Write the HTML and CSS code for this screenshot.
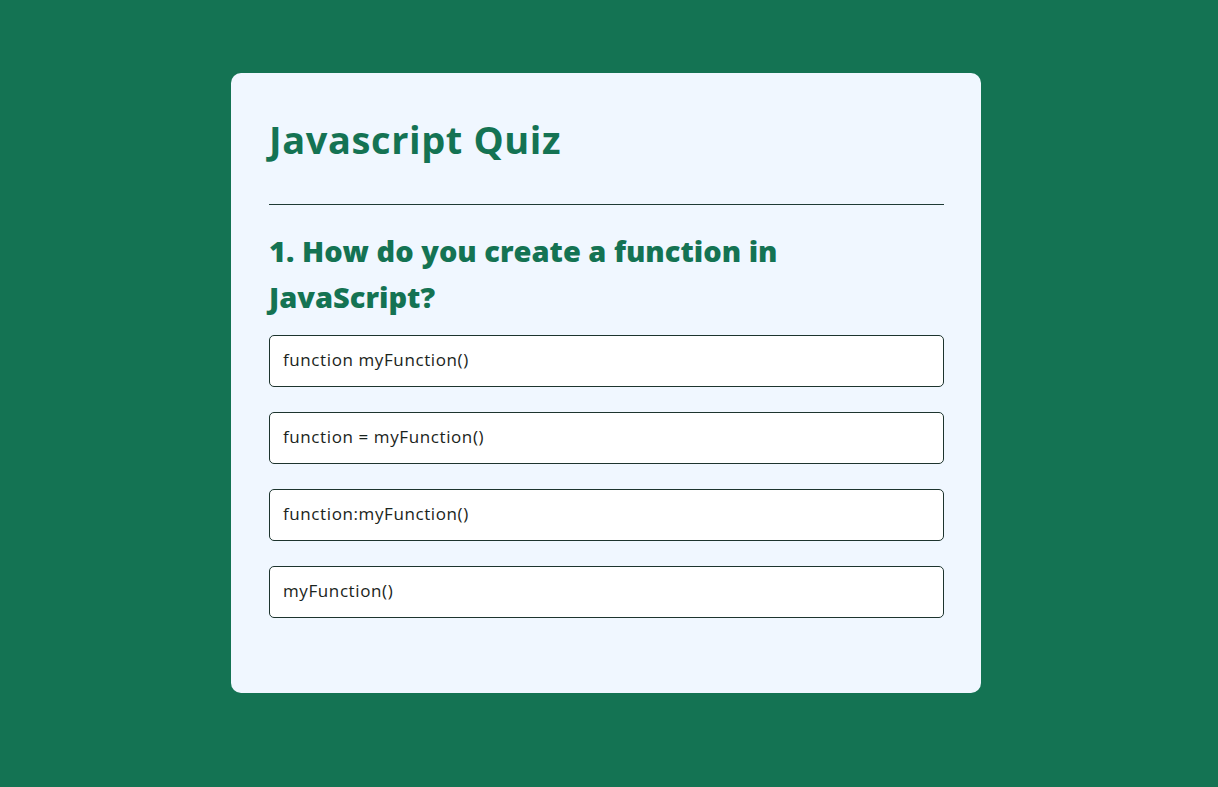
FILE: index.html
```html
<!DOCTYPE html>
<html lang="en">
<head>
<meta charset="utf-8">
<title>Javascript Quiz</title>
<link rel="stylesheet" href="styles.css">
</head>
<body>
<main class="page">
  <section class="quiz">
    <h1 class="quiz-title">Javascript Quiz</h1>
    <hr class="divider">
    <h2 class="question">1. How do you create a function in JavaScript?</h2>
    <ul class="options">
      <li class="option">function myFunction()</li>
      <li class="option">function = myFunction()</li>
      <li class="option">function:myFunction()</li>
      <li class="option">myFunction()</li>
    </ul>
  </section>
</main>
</body>
</html>
```

FILE: styles.css
```css
* { box-sizing: border-box; }
html, body { margin: 0; padding: 0; }
body {
  background: #147353;
  font-family: "Open Sans", "DejaVu Sans", sans-serif;
  min-height: 787px;
}
.page {
  display: flex;
  justify-content: center;
  padding: 73px 6px 0 0;
}
.quiz {
  width: 750px;
  height: 620px;
  background: #f0f7ff;
  border-radius: 10px;
  padding: 38px 37px 0 38px;
}
.quiz-title {
  margin: 0;
  color: #147353;
  font-size: 38px;
  font-weight: 700;
  line-height: 56px;
  padding-top: 0;
  letter-spacing: 0.6px;
}
.divider {
  border: 0;
  border-top: 1px solid #1f3b35;
  margin: 37px 0 0 0;
}
.question {
  margin: 23px 0 0 0;
  color: #147353;
  font-size: 29px;
  font-weight: 800;
  line-height: 46px;
}
.options {
  list-style: none;
  margin: 15px 0 0 0;
  padding: 0;
  display: flex;
  flex-direction: column;
  gap: 25px;
}
.option {
  height: 52px;
  display: flex;
  align-items: center;
  padding: 0 0 3px 13px;
  background: #ffffff;
  border: 1px solid #1d342e;
  border-radius: 5px;
  color: #1a2420;
  font-size: 17px;
  letter-spacing: 0.6px;
}
```
